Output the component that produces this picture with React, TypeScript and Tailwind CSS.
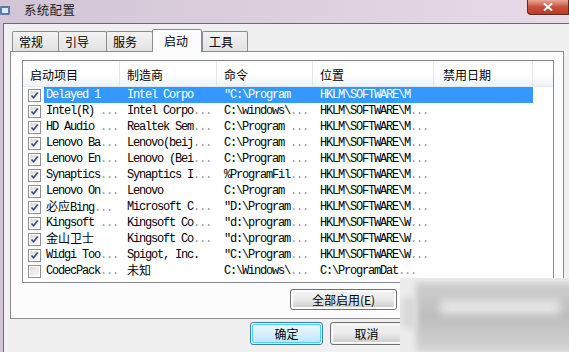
import React from 'react'

const CJK = /([\u4e00-\u9fff]+)/

function Txt({ s }: { s: string }) {
  // split trailing ellipsis and CJK runs
  let main = s
  let dots = ''
  if (s.endsWith('...')) {
    main = s.slice(0, -3)
    dots = '...'
  }
  return (
    <span className="whitespace-pre leading-none">
      {main.split(CJK).map((part, i) =>
        CJK.test(part) ? (
          <span key={i} className="font-['Noto_Sans_CJK_SC',sans-serif] text-[12px] leading-none tracking-normal">
            {part}
          </span>
        ) : (
          <span key={i}>{part}</span>
        )
      )}
      {dots && <span className="text-[#9a9a9a]">{dots}</span>}
    </span>
  )
}

const rows: { on: boolean; c: string[] }[] = [
  { on: true, c: ['Delayed 1', 'Intel Corpo', '"C:\\Program', 'HKLM\\SOFTWARE\\M', ''] },
  { on: true, c: ['Intel(R) ...', 'Intel Corpo...', 'C:\\windows\\...', 'HKLM\\SOFTWARE\\M...', ''] },
  { on: true, c: ['HD Audio ...', 'Realtek Sem...', 'C:\\Program ...', 'HKLM\\SOFTWARE\\M...', ''] },
  { on: true, c: ['Lenovo Ba...', 'Lenovo(beij...', 'C:\\Program ...', 'HKLM\\SOFTWARE\\M...', ''] },
  { on: true, c: ['Lenovo En...', 'Lenovo (Bei...', 'C:\\Program ...', 'HKLM\\SOFTWARE\\M...', ''] },
  { on: true, c: ['Synaptics...', 'Synaptics I...', '%ProgramFil...', 'HKLM\\SOFTWARE\\M...', ''] },
  { on: true, c: ['Lenovo On...', 'Lenovo', 'C:\\Program ...', 'HKLM\\SOFTWARE\\M...', ''] },
  { on: true, c: ['必应Bing...', 'Microsoft C...', '"D:\\Program...', 'HKLM\\SOFTWARE\\M...', ''] },
  { on: true, c: ['Kingsoft ...', 'Kingsoft Co...', '"d:\\program...', 'HKLM\\SOFTWARE\\W...', ''] },
  { on: true, c: ['金山卫士', 'Kingsoft Co...', '"d:\\program...', 'HKLM\\SOFTWARE\\W...', ''] },
  { on: true, c: ['Widgi Too...', 'Spigot, Inc.', '"C:\\Program...', 'HKLM\\SOFTWARE\\W...', ''] },
  { on: false, c: ['CodecPack...', '未知', 'C:\\Windows\\...', 'C:\\ProgramDat...', ''] },
]

const tabs = [
  { t: '常规', w: 'w-[47px]' },
  { t: '引导', w: 'w-[49px]' },
  { t: '服务', w: 'w-[47px]' },
  { t: '启动', w: 'w-[50px]', sel: true },
  { t: '工具', w: 'w-[46px]' },
]

const cellW = ['w-[76px] pl-[2px]', 'w-[97px] pl-[7px]', 'w-[96px] pl-[7px]', 'w-[121px] pl-[7px]', 'w-[99px] pl-[9px]']

function Check({ on }: { on: boolean }) {
  return (
    <div className="w-[13px] h-[13px] border border-[#8e8f8f] bg-white p-px shrink-0">
      <div className="w-full h-full bg-gradient-to-br from-[#dcdcdc] to-[#fbfbfb] flex items-center justify-center">
        {on && (
          <svg width="9" height="9" viewBox="0 0 9 9">
            <path d="M1.5 4.5 L3.6 6.8 L7.6 1.6" fill="none" stroke="#3b4f7a" strokeWidth="1.7" />
          </svg>
        )}
      </div>
    </div>
  )
}

function Btn({ label, w, h = 'h-[23px]', focus }: { label: string; w: string; h?: string; focus?: boolean }) {
  return (
    <div className={`${w} ${h} rounded-[3px] border ${focus ? 'border-[#3c7fb1]' : 'border-[#707070]'} p-px`}>
      <div
        className={`w-full h-full rounded-[2px] flex items-center justify-center text-[12px] leading-none ${
          focus
            ? 'bg-gradient-to-b from-[#eaf6fd] via-[#d9f0fc] to-[#bee6fd] border border-[#48d4f8]'
            : 'bg-gradient-to-b from-[#f2f2f2] via-[#ebebeb] to-[#cfcfcf] border border-[#fcfcfc]'
        }`}
      >
        {label}
      </div>
    </div>
  )
}

export default function App() {
  return (
    <div className="relative w-[569px] h-[352px] overflow-hidden bg-gradient-to-r from-[#d2c5d6] via-[#ddcfdd] to-[#e9dae8] font-['Noto_Sans_CJK_SC',sans-serif] text-[12px] text-black">
      {/* title bar */}
      <div className="h-[23px] flex items-center relative">
        <svg width="12" height="12" viewBox="0 0 12 12" className="mt-[-2px]">
          <rect x="0" y="1" width="10" height="9" rx="1" fill="#5b7aa6" />
          <rect x="2" y="3" width="6" height="5" fill="#dfe8f3" />
        </svg>
        <span className="ml-[12px] mt-[-3px] text-[12.5px] tracking-[0.3px] text-[#1a1a1a]">系统配置</span>
        <div className="absolute right-0 top-0 w-[42px] h-[15px] rounded-bl-[4px] border border-t-0 border-[#5c2a22] bg-gradient-to-b from-[#e9a89a] via-[#c7503a] to-[#b83d24] flex items-center justify-center">
          <svg width="10" height="8" viewBox="0 0 10 8">
            <path d="M1 0.5 L9 7.5 M9 0.5 L1 7.5" stroke="white" strokeWidth="2" />
          </svg>
        </div>
      </div>

      {/* body */}
      <div className="ml-[3px] h-[329px] border-l border-t border-[#6a6a70] bg-[#f0f0f0]">
        {/* tabs */}
        <div className="flex items-end h-[27px] pl-[8px] pt-[6px]">
          {tabs.map((t) =>
            t.sel ? (
              <div
                key={t.t}
                className={`${t.w} h-[23px] -mb-px relative z-10 border border-b-0 border-[#898c95] bg-[#fcfcfc] rounded-t-[2px] flex items-start pl-[11px] pt-[2px]`}
              >
                {t.t}
              </div>
            ) : (
              <div
                key={t.t}
                className={`${t.w} h-[20px] -mr-px border border-b-0 border-[#898c95] bg-gradient-to-b from-[#f2f2f2] to-[#e3e3e3] rounded-t-[2px] flex items-center pl-[6px] pt-[1px]`}
              >
                {t.t}
              </div>
            )
          )}
        </div>

        {/* tab panel */}
        <div className="ml-[6px] w-[554px] h-[268px] border border-[#898c95] bg-[#fcfcfc] pl-[11px] pt-[8px]">
          {/* list */}
          <div className="w-[532px] h-[223px] border border-[#828790] bg-white">
            <div className="h-[26px] flex bg-gradient-to-b from-white via-white to-[#f1f2f4] border-b border-[#e5e8ec]">
              {[
                ['启动项目', 'w-[97px] pl-[7px]'],
                ['制造商', 'w-[97px] pl-[7px]'],
                ['命令', 'w-[96px] pl-[7px]'],
                ['位置', 'w-[121px] pl-[7px]'],
                ['禁用日期', 'w-[99px] pl-[9px]'],
              ].map(([h, cls]) => (
                <div key={h} className={`${cls} h-full flex items-center pt-[2px] border-r border-[#e3e5e8]`}>
                  {h}
                </div>
              ))}
            </div>
            <div className="font-['Liberation_Mono',monospace] text-[12px] tracking-[-1.2px]">
              {rows.map((r, i) => (
                <div key={i} className="h-[16px] flex items-center pl-[5px]">
                  <Check on={r.on} />
                  <div className={`ml-[3px] w-[489px] h-full flex items-center ${i === 0 ? 'bg-[#3399ff] text-white' : ''}`}>
                    {r.c.map((c, j) => (
                      <div key={j} className={`h-full flex items-center ${cellW[j]}`}>
                        <Txt s={c} />
                      </div>
                    ))}
                  </div>
                </div>
              ))}
            </div>
          </div>

          {/* enable / disable all */}
          <div className="flex gap-[8px] mt-[6px] pl-[268px]">
            <Btn label="全部启用(E)" w="w-[107px]" h="h-[21px]" />
            <Btn label="全部禁用(D)" w="w-[107px]" h="h-[21px]" />
          </div>
        </div>

        {/* dialog buttons */}
        <div className="flex gap-[7px] mt-[3px] pl-[246px]">
          <Btn label="确定" w="w-[73px]" focus />
          <Btn label="取消" w="w-[73px]" />
          <Btn label="应用(A)" w="w-[73px]" />
          <Btn label="帮助" w="w-[73px]" />
        </div>
      </div>

      {/* blurred watermark over the lower right corner */}
      <div className="absolute left-[400px] top-[278px] w-[169px] h-[74px] bg-[#ececec] overflow-hidden">
        <div className="absolute left-[16px] top-[4px] w-[160px] h-[70px] bg-gradient-to-b from-[#cfcfcf] via-[#bdbdbd] to-[#d4d4d4] blur-[3px]" />
        <div className="absolute left-[40px] top-[22px] w-[120px] h-[14px] bg-[#e6e6e6] blur-[4px]" />
        <div className="absolute left-[2px] top-[20px] w-[14px] h-[30px] bg-[#d8d8d8] blur-[3px]" />
      </div>
    </div>
  )
}
